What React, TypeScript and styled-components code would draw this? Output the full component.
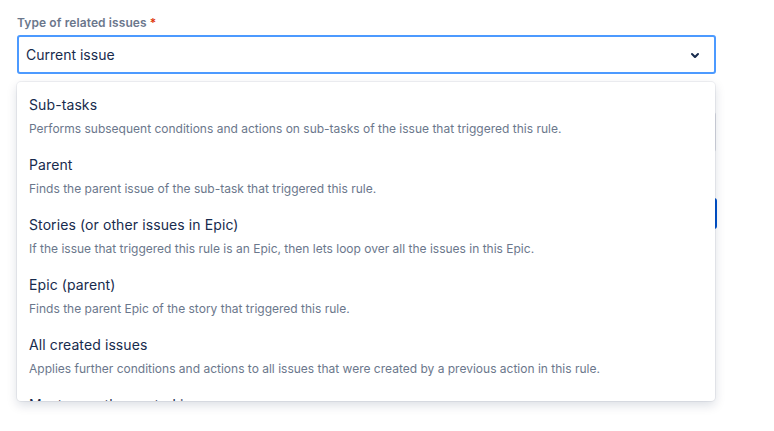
import React from 'react';
import styled, { createGlobalStyle } from 'styled-components';

const GlobalStyle = createGlobalStyle`
	html, body {
		margin: 0;
		padding: 0;
		background: #ffffff;
	}
	body {
		font-family: Inter, 'Liberation Sans', sans-serif;
		color: #172b4d;
		-webkit-font-smoothing: antialiased;
	}
`;

const options = [
	{
		title: 'Sub-tasks',
		description: 'Performs subsequent conditions and actions on sub-tasks of the issue that triggered this rule.',
	},
	{
		title: 'Parent',
		description: 'Finds the parent issue of the sub-task that triggered this rule.',
	},
	{
		title: 'Stories (or other issues in Epic)',
		description: 'If the issue that triggered this rule is an Epic, then lets loop over all the issues in this Epic.',
	},
	{
		title: 'Epic (parent)',
		description: 'Finds the parent Epic of the story that triggered this rule.',
	},
	{
		title: 'All created issues',
		description: 'Applies further conditions and actions to all issues that were created by a previous action in this rule.',
	},
	{
		title: 'Most recently created issue',
		description: 'Applies further conditions and actions to the most recently created issue in this rule.',
	},
];

export default function App() {
	return (
		<>
			<GlobalStyle />
			<StyledPage>
				<StyledForm>
					<StyledLabel>
						Type of related issues<StyledRequired>*</StyledRequired>
					</StyledLabel>
					<StyledSelectWrapper>
						<StyledSelect>
							<StyledValue>Current issue</StyledValue>
							<ChevronDown />
						</StyledSelect>
						<StyledMenu>
							{options.map((option) => (
								<StyledOption key={option.title}>
									<StyledOptionTitle>{option.title}</StyledOptionTitle>
									<StyledOptionDescription>{option.description}</StyledOptionDescription>
								</StyledOption>
							))}
						</StyledMenu>
					</StyledSelectWrapper>
					<StyledTextInput />
					<StyledButtonRow>
						<StyledButton aria-label="Save" />
					</StyledButtonRow>
				</StyledForm>
			</StyledPage>
		</>
	);
}

const ChevronDown = () => (
	<StyledChevron width="24" height="24" viewBox="0 0 24 24" aria-hidden>
		<path
			d="M8.292 10.293a1.009 1.009 0 0 0 0 1.419l2.939 2.965c.218.215.5.322.779.322s.556-.107.769-.322l2.93-2.955a1.01 1.01 0 0 0 0-1.419.987.987 0 0 0-1.406 0l-2.298 2.317-2.307-2.327a.99.99 0 0 0-1.406 0z"
			fill="currentColor"
		/>
	</StyledChevron>
);

const StyledPage = styled.div`
	padding: 15px 0 0 17px;
	width: 774px;
	height: 431px;
	box-sizing: border-box;
	overflow: hidden;
`;

const StyledForm = styled.div`
	width: 699px;
	display: flex;
	flex-direction: column;
`;

const StyledLabel = styled.label`
	display: block;
	font-size: 12px;
	line-height: 16px;
	font-weight: 600;
	letter-spacing: 0.1px;
	color: #6b778c;
	margin-bottom: 4px;
`;

const StyledRequired = styled.span`
	color: #de350b;
	padding-left: 3px;
`;

const StyledSelectWrapper = styled.div`
	position: relative;
	z-index: 2;
`;

const StyledSelect = styled.div`
	height: 39px;
	box-sizing: border-box;
	border: 2px solid #4c9aff;
	border-radius: 3px;
	background: #ffffff;
	display: flex;
	align-items: center;
	justify-content: space-between;
	padding: 1px 7px 0 7px;
`;

const StyledValue = styled.span`
	font-size: 14px;
	line-height: 20px;
	color: #172b4d;
`;

const StyledChevron = styled.svg`
	color: #172b4d;
	display: block;
`;

const StyledMenu = styled.div`
	position: absolute;
	top: 47px;
	left: 0;
	width: 698px;
	height: 319px;
	box-sizing: border-box;
	padding-top: 4px;
	background: #ffffff;
	border-radius: 4px;
	overflow: hidden;
	box-shadow: 0 4px 11px rgba(9, 30, 66, 0.15), 0 0 0 1px rgba(9, 30, 66, 0.06);
`;

const StyledOption = styled.div`
	padding: 9px 12px 9px;
`;

const StyledOptionTitle = styled.div`
	font-size: 14px;
	line-height: 20px;
	letter-spacing: 0.1px;
	color: #172b4d;
	margin-bottom: 6px;
`;

const StyledOptionDescription = styled.div`
	font-size: 12px;
	line-height: 16px;
	color: #6b778c;
	white-space: nowrap;
`;

const StyledTextInput = styled.div`
	margin-top: 38px;
	height: 40px;
	box-sizing: border-box;
	border: 2px solid #dfe1e6;
	border-radius: 3px;
	background: #fafbfc;
`;

const StyledButtonRow = styled.div`
	display: flex;
	justify-content: flex-end;
	margin-top: 46px;
	margin-right: -1px;
`;

const StyledButton = styled.button`
	width: 64px;
	height: 31px;
	border: none;
	border-radius: 3px;
	background: #0052cc;
`;
